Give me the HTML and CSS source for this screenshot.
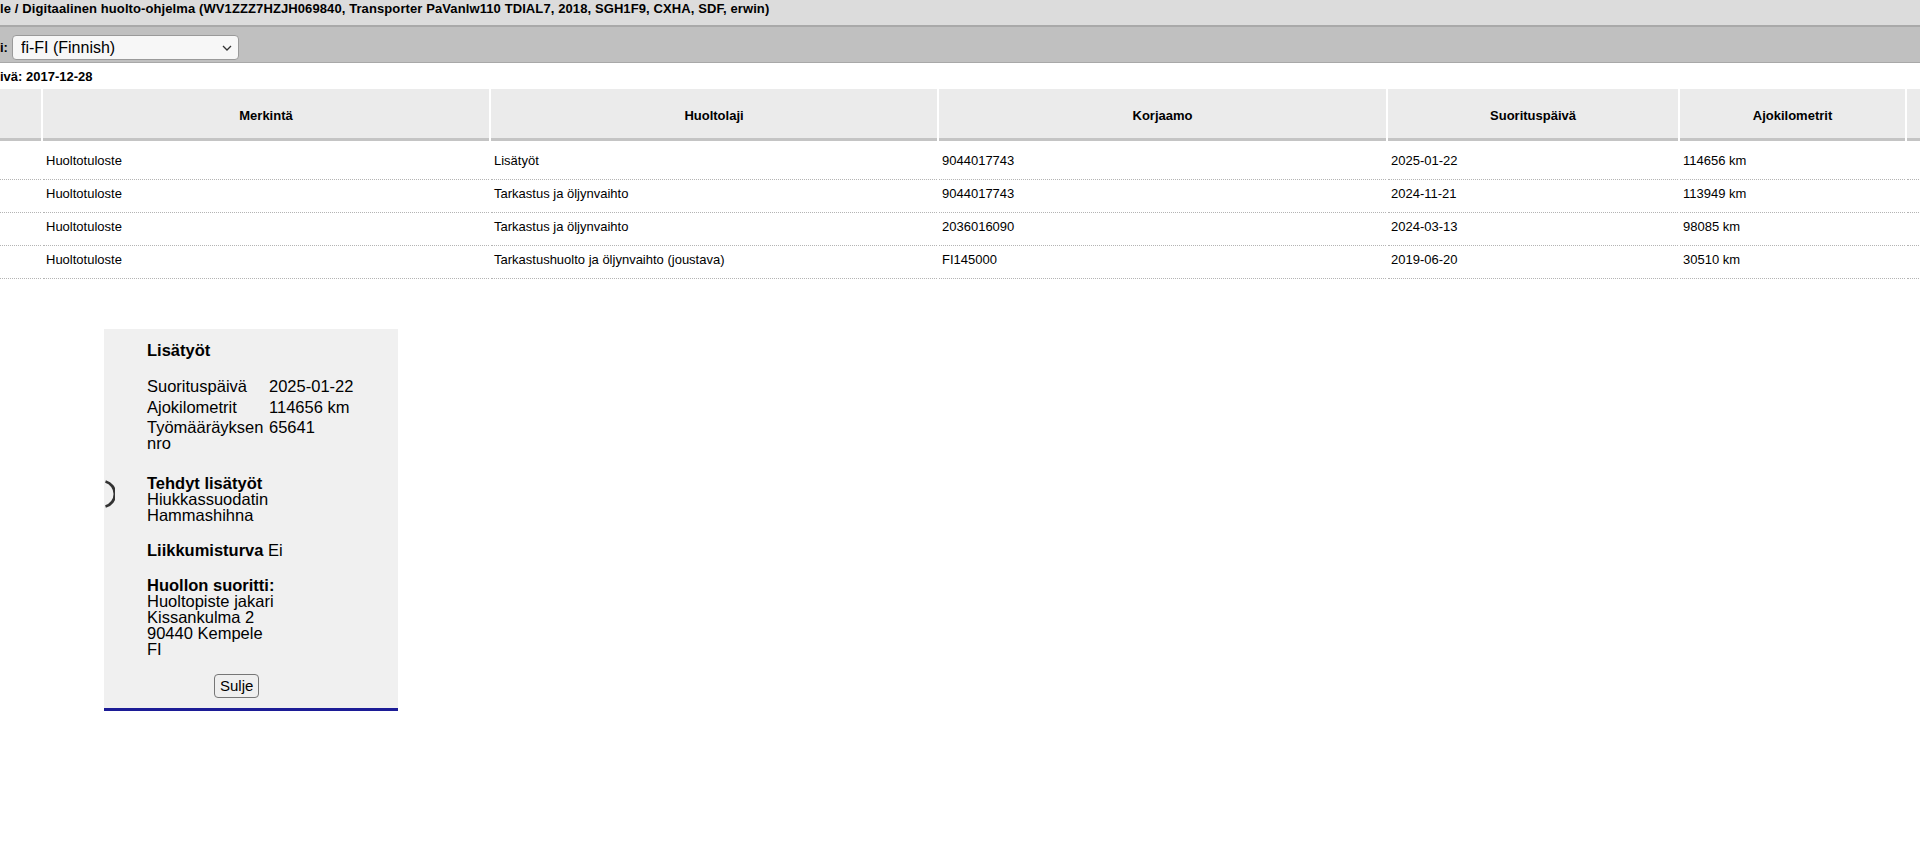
FILE: index.html
```html
<!DOCTYPE html>
<html lang="fi">
<head>
    <meta charset="UTF-8">
    <title>Digitaalinen huolto-ohjelma</title>
    <link rel="stylesheet" href="styles.css">
</head>
<body>
    <div class="topbar">le / Digitaalinen huolto-ohjelma (WV1ZZZ7HZJH069840, Transporter PaVanlw110 TDIAL7, 2018, SGH1F9, CXHA, SDF, erwin)</div>

    <div class="langbar">
        <label for="lang">i:</label>
        <span class="select-wrap">
            <select id="lang">
                <option>fi-FI (Finnish)</option>
            </select>
            <svg class="select-arrow" width="10" height="6" viewBox="0 0 10 6">
                <path d="M1 1 L5 5 L9 1" fill="none" stroke="#333" stroke-width="1.3"/>
            </svg>
        </span>
    </div>

    <div class="dateline">ivä: 2017-12-28</div>

    <!-- Service history -->
    <table class="history">
        <colgroup>
            <col class="c-icon">
            <col class="c-wide">
            <col class="c-wide">
            <col class="c-shop">
            <col class="c-date">
            <col class="c-km">
            <col class="c-rest">
        </colgroup>
        <thead>
            <tr>
                <th></th>
                <th>Merkintä</th>
                <th>Huoltolaji</th>
                <th>Korjaamo</th>
                <th>Suorituspäivä</th>
                <th>Ajokilometrit</th>
                <th></th>
            </tr>
        </thead>
        <tbody>
            <tr>
                <td></td>
                <td>Huoltotuloste</td>
                <td>Lisätyöt</td>
                <td>9044017743</td>
                <td>2025-01-22</td>
                <td>114656 km</td>
                <td></td>
            </tr>
            <tr>
                <td></td>
                <td>Huoltotuloste</td>
                <td>Tarkastus ja öljynvaihto</td>
                <td>9044017743</td>
                <td>2024-11-21</td>
                <td>113949 km</td>
                <td></td>
            </tr>
            <tr>
                <td></td>
                <td>Huoltotuloste</td>
                <td>Tarkastus ja öljynvaihto</td>
                <td>2036016090</td>
                <td>2024-03-13</td>
                <td>98085 km</td>
                <td></td>
            </tr>
            <tr>
                <td></td>
                <td>Huoltotuloste</td>
                <td>Tarkastushuolto ja öljynvaihto (joustava)</td>
                <td>FI145000</td>
                <td>2019-06-20</td>
                <td>30510 km</td>
                <td></td>
            </tr>
        </tbody>
    </table>

    <!-- Detail popup -->
    <div class="popup">
        <svg class="popup-knob" width="11" height="28" viewBox="0 0 11 28">
            <path d="M1.5 1.5 A13 13 0 0 1 1.5 26.5" fill="none" stroke="#333" stroke-width="2.8"/>
        </svg>
        <div class="popup-title">Lisätyöt</div>
        <table class="info">
            <tr><td class="key">Suorituspäivä</td><td>2025-01-22</td></tr>
            <tr><td class="key">Ajokilometrit</td><td>114656 km</td></tr>
            <tr><td class="key">Työmääräyksen nro</td><td>65641</td></tr>
        </table>
        <div class="section first">
            <b>Tehdyt lisätyöt</b><br>
            Hiukkassuodatin<br>
            Hammashihna
        </div>
        <div class="section">
            <b>Liikkumisturva</b> Ei
        </div>
        <div class="section">
            <b>Huollon suoritti:</b><br>
            Huoltopiste jakari<br>
            Kissankulma 2<br>
            90440 Kempele<br>
            FI
        </div>
        <div class="popup-actions">
            <button class="close-btn">Sulje</button>
        </div>
    </div>
</body>
</html>
```

FILE: styles.css
```css
/* Page */
html, body {
    overflow: hidden;
}

body {
    margin: 0;
    font-family: "Liberation Sans", Arial, sans-serif;
    color: #000;
    background: #fff;
    position: relative;
    min-height: 859px;
}

/* Header bars */
.topbar {
    height: 25px;
    line-height: 17px;
    font-size: 13px;
    font-weight: bold;
    letter-spacing: 0.1px;
    white-space: nowrap;
    background: #dcdcdc;
    border-bottom: 2px solid #a9a9a9;
}

.langbar {
    background: #c0c0c0;
    padding: 8px 0 2px;
    border-bottom: 1px solid #a8a8a8;
    font-size: 13px;
    font-weight: bold;
    display: flex;
    align-items: center;
}

.langbar label {
    margin-right: 4px;
}

.select-wrap {
    position: relative;
    display: inline-block;
    height: 25px;
}

.select-wrap select {
    -webkit-appearance: none;
    appearance: none;
    width: 227px;
    height: 25px;
    font-family: "Liberation Sans", Arial, sans-serif;
    font-size: 16px;
    padding: 0 4px 0 8px;
    background-color: #f7f7f7;
    border: 1px solid #9a9a9a;
    border-radius: 4px;
    color: #000;
}

.select-arrow {
    position: absolute;
    right: 7px;
    top: 10px;
    pointer-events: none;
}

.dateline {
    padding-top: 6px;
    line-height: 15px;
    font-size: 13px;
    font-weight: bold;
}

/* History table */
.history {
    margin: 5px 0 0 -2px;
    width: 2061px;
    table-layout: fixed;
    border-collapse: separate;
    border-spacing: 2px 0;
    font-size: 13px;
}

.c-icon { width: 41px; }
.c-wide { width: 446px; }
.c-shop { width: 447px; }
.c-date { width: 290px; }
.c-km { width: 225px; }
.c-rest { width: 150px; }

.history th {
    background: #ebebeb;
    border-bottom: 3px solid #c4c4c4;
    padding: 19px 4px 14px;
    line-height: 16px;
    font-weight: bold;
    text-align: center;
}

.history td {
    padding: 6px 3px 11px;
    line-height: 15px;
    border-bottom: 1px dotted #b4b4b4;
    white-space: nowrap;
    text-align: left;
    color: #000;
}

.history tbody tr:first-child td {
    padding-top: 12px;
}

/* Popup */
.popup {
    position: absolute;
    left: 104px;
    top: 329px;
    width: 294px;
    box-sizing: border-box;
    padding: 13px 30px 10px 43px;
    background: #f0f0f0;
    border-bottom: 3px solid #1c1c96;
    font-size: 16.5px;
    line-height: 16px;
}

.popup-knob {
    position: absolute;
    left: 0;
    top: 151px;
}

.popup-title {
    font-weight: bold;
}

.info {
    margin: 17px 0 3px;
    border-collapse: separate;
    border-spacing: 0 2px;
    table-layout: fixed;
    width: 222px;
    font-size: 16.5px;
    line-height: 16px;
}

.info td {
    padding: 1px 0 1.5px;
    vertical-align: top;
}

.info td.key {
    width: 122px;
}

.section {
    margin-top: 19px;
}

.section.first {
    margin-top: 20px;
}

.popup-actions {
    margin-top: 17px;
    padding-left: 67px;
}

.close-btn {
    font-family: "Liberation Sans", Arial, sans-serif;
    font-size: 15px;
    height: 24px;
    padding: 1px 5px;
    background: #efefef;
    border: 1px solid #767676;
    border-radius: 4px;
    color: #000;
}
```
